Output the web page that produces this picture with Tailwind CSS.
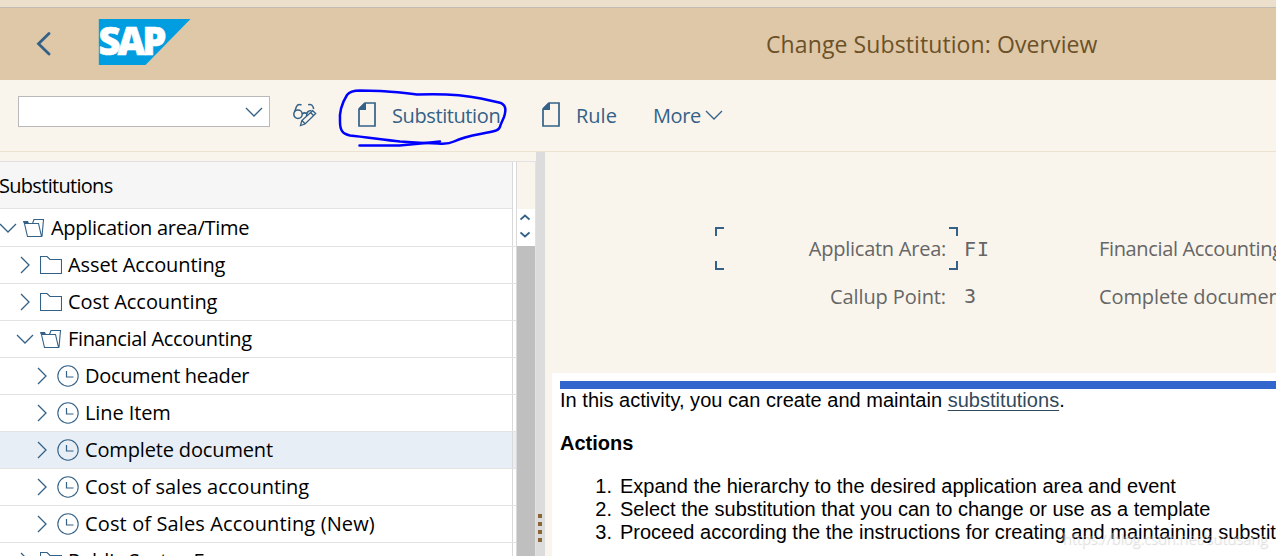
<!DOCTYPE html>
<html lang="en">
<head>
    <meta charset="UTF-8">
    <meta name="viewport" content="width=device-width, initial-scale=1.0">
    <title>Change Substitution: Overview</title>
    <script src="https://cdn.jsdelivr.net/npm/@tailwindcss/browser@4"></script>
</head>
<body class="relative w-[1276px] h-[556px] overflow-hidden flex flex-col bg-[#f9f5ed] font-['Open_Sans',sans-serif] text-[20px] leading-none text-black">
    <!-- Shared icons -->
    <svg class="hidden">
        <symbol id="down" viewBox="0 0 18 10"><path d="M1 1l8 8 8-8" fill="none" stroke="#346187" stroke-width="1.3"/></symbol>
        <symbol id="right" viewBox="0 0 10 18"><path d="M1 1l8 8-8 8" fill="none" stroke="#346187" stroke-width="1.3"/></symbol>
        <symbol id="open" viewBox="0 0 22 18"><path d="M1 2.5L4.500 17.500H18.500L15.500 4.500H1.500M9.500 4.500L11 .5H20.500L19 17.500" fill="none" stroke="#346187" stroke-width="1.1"/><path d="M0 2h5l1 2.500H1z" fill="#346187"/></symbol>
        <symbol id="folder" viewBox="0 0 22 18"><path d="M.5 17.500V.5H7l3 3h11.500v14z" fill="none" stroke="#346187" stroke-width="1.1"/></symbol>
        <symbol id="clock" viewBox="0 0 22 22"><circle cx="11" cy="11" r="10.200" fill="none" stroke="#346187" stroke-width="1.100"/><path d="M9.500 6v6h7" fill="none" stroke="#346187" stroke-width="1.200"/></symbol>
        <symbol id="page" viewBox="0 0 18 25"><path d="M7 1h10v23H1V7z" fill="none" stroke="#346187" stroke-width="1.700"/><path d="M1 8V6l5-5h2v7z" fill="#346187"/></symbol>
    </svg>

    <!-- Title bar -->
    <div class="h-2 shrink-0 bg-[#ecdfcc] border-b border-[#c0bcb4]"></div>
    <header class="h-[72px] shrink-0 flex items-start bg-[#dfc8a8]">
        <svg class="w-4 h-6 ml-9 mt-6" viewBox="0 0 16 24"><path d="M13 1.500L2.500 11.800 13 22" fill="none" stroke="#346187" stroke-width="2.800" stroke-linecap="round"/></svg>
        <svg class="w-[93px] h-[46px] ml-[46px] mt-[11px] overflow-visible" viewBox="0 0 93 46">
            <path d="M.8 0H92.500L47.500 46H.8z" fill="#009de0"/>
            <text x="0.500" y="35.500" font-family="Open Sans" font-weight="800" font-size="38" fill="#fff" stroke="#fff" stroke-width=".6" textLength="65" lengthAdjust="spacingAndGlyphs" letter-spacing="-3">SAP</text>
        </svg>
        <h1 class="ml-[575px] mt-[22px] text-[23px] leading-7 tracking-[0.1px] text-[#6c5128] whitespace-nowrap">Change Substitution: Overview</h1>
    </header>

    <!-- Toolbar -->
    <div class="relative h-[72px] shrink-0 flex items-start border-b border-[#ebe2d0] text-[#346187] leading-7">
        <div class="w-[252px] h-[31px] ml-[18px] mt-4 flex items-center justify-end pr-[6px] bg-white border border-[#b9b9b9]">
            <svg class="w-[18px] h-[10px] mt-px"><use href="#down"/></svg>
        </div>
        <svg class="w-6 h-6 ml-[23px] mt-[23px]" viewBox="0 0 24 24" fill="none" stroke="#346187" stroke-width="1.500">
            <circle cx="5" cy="11.300" r="4.200"/><path d="M1.500 9L3.500 3.500Q5 .5 8.500 2M9.200 11q2.300-2 4.300-.5M13.500 13q0-5.500 5-5.500M15.200 1.700Q19.500.2 20.700 6"/>
            <path d="M7.500 22.500l1.300-5L19.700 7.700l3 2.800L12 21zM9 17.500l3 3.300M17.500 9.500l3 3" stroke-width="1.300"/>
        </svg>
        <svg class="w-[18px] h-[25px] ml-[41px] mt-[22px]"><use href="#page"/></svg>
        <span class="w-[109px] ml-4 mt-[22px] tracking-[-0.4px]">Substitution</span>
        <svg class="w-[18px] h-[25px] ml-[41px] mt-[22px]"><use href="#page"/></svg>
        <span class="w-[42px] ml-4 mt-[22px]">Rule</span>
        <span class="w-[49px] ml-[35px] mt-[22px] tracking-[-0.4px]">More</span>
        <svg class="w-[18px] h-[10px] ml-[3px] mt-[30px]"><use href="#down"/></svg>
        <!-- Pen mark round the first button -->
        <svg class="absolute left-[320px] top-0 w-[200px] h-[72px]" viewBox="0 80 200 72" fill="none" stroke="#0000fe" stroke-width="2.500" stroke-linecap="round" stroke-linejoin="round">
            <path d="M40 90.500C34 90.500 30 91 27 95C22 103 19 112 20 122C20 131 23 134 30 135.500C45 137 65 140 80 141.500Q100 143 118 143.500Q128 144.500 134 141.500C147 135 165 134 176 130.500Q180 129 180.500 125L184 117C187 108 185 104 179 102.500L161 98.500Q135 93 97 94.500C80 92 70 92 60 91Z"/><path d="M39.500 145.500h40q22-2 40.500-4"/>
        </svg>
    </div>

    <main class="flex-1 min-h-0 flex">
        <!-- Hierarchy -->
        <section class="w-[517px] shrink-0 mt-[9px] flex flex-col border-t border-[#e0e0e0] bg-white">
            <div class="flex">
                <div class="w-[513px] border-r border-[#d9d9d9]">
                    <div class="h-[47px] flex items-center bg-[#f6f6f6] border-b border-[#e2e2e2] pt-[2px]"><span class="-ml-px tracking-[-0.7px]">Substitutions</span></div>
                    <ul id="tree" class="w-[516px] pt-px"></ul>
                </div>
                <div class="w-1 border-r border-[#d9d9d9]"></div>
            </div>
        </section>
        <div class="w-[19px] shrink-0 mt-[9px] border-t border-r border-[#e2e2e2] flex flex-col">
            <div class="h-[47px]"></div>
            <div class="h-[37px] bg-white flex flex-col items-center justify-between pt-[5px] pb-[8px] pr-[3px]">
                <svg class="w-[10px] h-[7px]" viewBox="0 0 10 7"><path d="M.5 5.500L5 1.500l4.500 4" fill="none" stroke="#346187" stroke-width="1.800"/></svg>
                <svg class="w-[10px] h-[7px]" viewBox="0 0 10 7"><path d="M.5 1.500l4.500 4 4.500-4" fill="none" stroke="#346187" stroke-width="1.800"/></svg>
            </div>
            <div class="flex-1 bg-[#bfbfbf]"></div>
        </div>
        <div class="w-[9px] shrink-0 bg-[#dcdcdc] flex flex-col items-center justify-end gap-1 pb-[14px] pr-px">
            <i class="size-1 bg-[#8a6731]"></i><i class="size-1 bg-[#8a6731]"></i><i class="size-1 bg-[#8a6731]"></i><i class="size-1 bg-[#8a6731]"></i>
        </div>

        <!-- Detail -->
        <section class="w-[731px] shrink-0 flex flex-col text-[#666] whitespace-nowrap">
            <div class="h-[221px] shrink-0 pt-[75px] pl-[170px]">
                <div class="flex items-center h-[43px]">
                    <div class="relative w-[243px] h-[43px] shrink-0 flex items-center justify-end pr-3">
                        <i class="absolute left-0 top-0 size-[9px] border-t-2 border-l-2 border-[#346187]"></i>
                        <i class="absolute right-0 top-0 size-[9px] border-t-2 border-r-2 border-[#346187]"></i>
                        <i class="absolute left-0 bottom-0 size-[9px] border-b-2 border-l-2 border-[#346187]"></i>
                        <i class="absolute right-0 bottom-0 size-[9px] border-b-2 border-r-2 border-[#346187]"></i>
                        <span class="tracking-[-0.25px]">Applicatn Area:</span>
                    </div>
                    <span class="w-[141px] shrink-0 pl-[6px] font-['DejaVu_Sans_Mono',monospace] tracking-[1px]">FI</span>
                    <span class="tracking-[-0.35px]">Financial Accounting</span>
                </div>
                <div class="flex items-center h-[43px] mt-[5px]">
                    <div class="w-[243px] shrink-0 pr-3 text-right tracking-[-0.1px]">Callup Point:</div>
                    <span class="w-[141px] shrink-0 pl-[6px] pb-0.5 font-['DejaVu_Sans_Mono',monospace]">3</span>
                    <span class="tracking-[-0.1px]">Complete document</span>
                </div>
            </div>
            <article class="flex-1 ml-[7px] pl-2 pt-2 bg-white text-black font-['Liberation_Sans',sans-serif] leading-[23px]">
                <div class="h-2 bg-[#3266cc]"></div>
                <p class="tracking-[0.025px]">In this activity, you can create and maintain <a class="text-[#33495c] underline decoration-1 underline-offset-3" href="#">substitutions</a>.</p>
                <h2 class="mt-5 font-bold">Actions</h2>
                <ol class="mt-5">
                    <li class="flex"><span class="w-[60px] shrink-0 pr-[8px] text-right">1.</span>Expand the hierarchy to the desired application area and event</li>
                    <li class="flex"><span class="w-[60px] shrink-0 pr-[8px] text-right">2.</span>Select the substitution that you can to change or use as a template</li>
                    <li class="flex"><span class="w-[60px] shrink-0 pr-[8px] text-right">3.</span>Proceed according the the instructions for creating and maintaining substitutions</li>
                </ol>
            </article>
        </section>
    </main>

    <!-- Watermark -->
    <div class="absolute left-[1062px] top-[528px] text-[15px] leading-5 tracking-[-0.3px] text-white/40 [text-shadow:1px_1px_1px_rgb(0_0_0/0.15)] whitespace-nowrap">https://blog.csdn.net/sutusang</div>

    <script>
        const rows = [
            [0, 'down', 'open', 'Application area/Time', 'tracking-[-0.3px]'],
            [1, 'right', 'folder', 'Asset Accounting', 'tracking-[-0.1px]'],
            [1, 'right', 'folder', 'Cost Accounting', 'tracking-[-0.05px]'],
            [1, 'down', 'open', 'Financial Accounting', 'tracking-[-0.35px]'],
            [2, 'right', 'clock', 'Document header', 'tracking-[-0.32px]'],
            [2, 'right', 'clock', 'Line Item', 'tracking-[-0.1px]'],
            [2, 'right', 'clock', 'Complete document', 'tracking-[-0.15px]'],
            [2, 'right', 'clock', 'Cost of sales accounting', ''],
            [2, 'right', 'clock', 'Cost of Sales Accounting (New)', 'tracking-[0.13px]'],
            [1, 'right', 'folder', 'Public Sector-Fa', 'tracking-[-0.1px]']
        ];
        const size = { down: 'w-[18px] h-[10px]', right: 'w-[10px] h-[18px]', open: 'w-[22px] h-[18px]', folder: 'w-[22px] h-[18px]', clock: 'size-[22px]' };
        document.getElementById('tree').innerHTML = rows.map(([level, arrow, icon, label, tracking]) => `
            <li class="h-[37px] flex items-center border-b border-[#e2e2e2] whitespace-nowrap ${label === 'Complete document' ? 'bg-[#e7eef6]' : ''}" style="padding-left:${level * 17}px">
                <span class="w-[16px] mr-[7px] flex justify-center"><svg class="${size[arrow]} shrink-0"><use href="#${arrow}"/></svg></span>
                <svg class="${size[icon]} mr-[6px]"><use href="#${icon}"/></svg>
                <span class="${tracking}">${label}</span>
                <i class="h-full ml-auto mr-[3px] border-l border-[#d9d9d9]"></i>
            </li>`).join('');
    </script>
</body>
</html>
